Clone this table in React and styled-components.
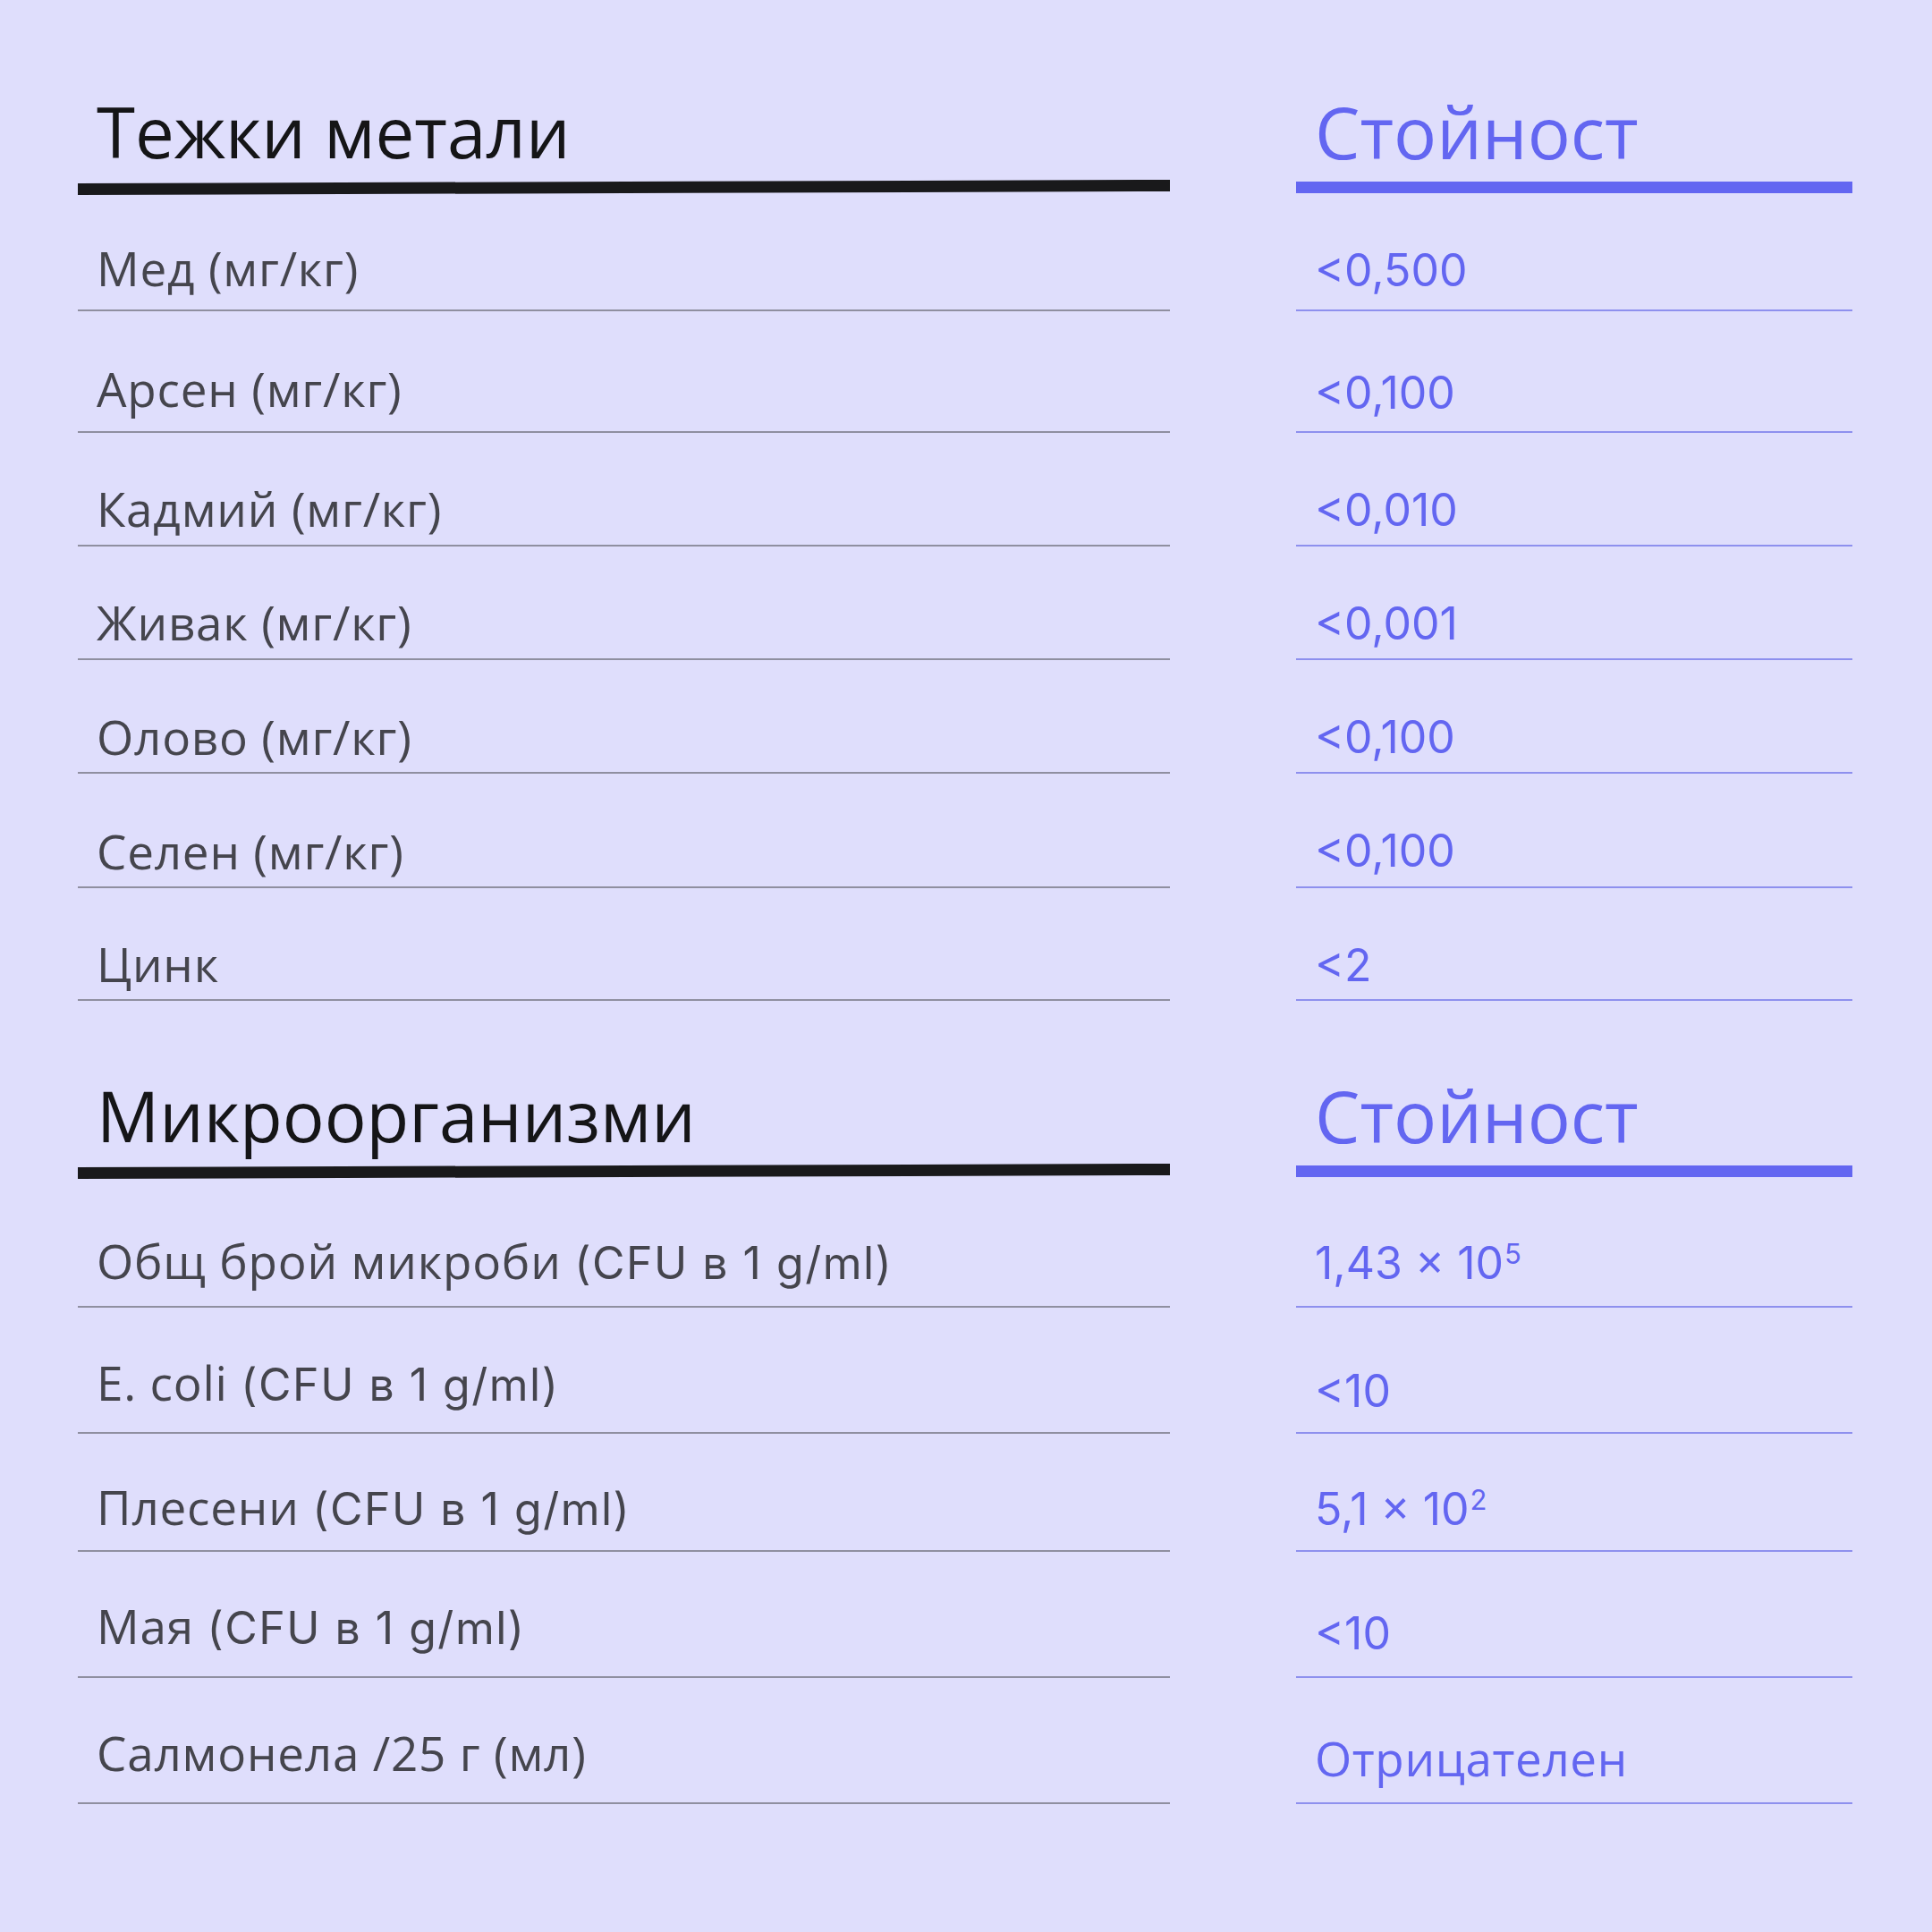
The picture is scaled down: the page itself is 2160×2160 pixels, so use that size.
import styled, { createGlobalStyle } from "styled-components";

const metals = [
  { label: "Мед", unit: "(мг/кг)", value: "<0,500", h: 132, pb: 20, vpb: 17 },
  { label: "Арсен", unit: "(мг/кг)", value: "<0,100", h: 136, pb: 21, vpb: 16 },
  { label: "Кадмий", unit: "(мг/кг)", value: "<0,010", h: 127, pb: 14, vpb: 12 },
  { label: "Живак", unit: "(мг/кг)", value: "<0,001", h: 127, pb: 14, vpb: 12 },
  { label: "Олово", unit: "(мг/кг)", value: "<0,100", h: 127, pb: 13, vpb: 12 },
  { label: "Селен", unit: "(мг/кг)", value: "<0,100", h: 128, pb: 13, vpb: 13 },
  { label: "Цинк", value: "<2", h: 126, pb: 13, vpb: 11 },
];

const microbes = [
  { label: "Общ брой микроби", unit: "(CFU в 1 g/ml)", latin: true, value: "1,43 × 10", exp: "5", h: 146, pb: 21, vpb: 21 },
  { label: "E. coli", unit: "(CFU в 1 g/ml)", latin: true, value: "<10", h: 141, pb: 26, vpb: 19 },
  { label: "Плесени", unit: "(CFU в 1 g/ml)", latin: true, value: "5,1 × 10", exp: "2", h: 132, pb: 19, vpb: 19 },
  { label: "Мая", unit: "(CFU в 1 g/ml)", latin: true, value: "<10", h: 141, pb: 27, vpb: 21 },
  { label: "Салмонела /25 г (мл)", value: "Отрицателен", cyr: true, h: 141, pb: 29, vpb: 23 },
];

const GlobalStyle = createGlobalStyle`
  html, body {
    margin: 0;
    padding: 0;
    background: #dfdefc;
  }
  body {
    font-family: "Open Sans", "Noto Sans", sans-serif;
  }
`;

const Page = styled.main`
  width: 2160px;
  height: 2160px;
  box-sizing: border-box;
  padding: 107px 89px 0 87px;
  background: #dfdefc;
`;

const Section = styled.section`
  display: grid;
  grid-template-columns: 1221px 622px;
  column-gap: 141px;
  margin-top: ${(p) => p.$top || 0}px;
`;

const HeadCell = styled.div`
  display: flex;
  flex-direction: column;
`;

const Title = styled.h2`
  margin: 0;
  padding-left: 21px;
  font-size: ${(p) => (p.$accent ? 80 : 78)}px;
  line-height: 80px;
  font-weight: 400;
  white-space: nowrap;
  color: ${(p) => (p.$accent ? "#6366f1" : "#151517")};
`;

const Bar = styled.div`
  height: 13px;
  margin-top: 16px;
  background: ${(p) => (p.$accent ? "#6366f1" : "#19191b")};
  transform: ${(p) => (p.$accent ? "none" : "rotate(-0.19deg)")};
`;

const Row = styled.div`
  height: ${(p) => p.$h}px;
  box-sizing: border-box;
  display: flex;
  align-items: flex-end;
  padding: 0 0 ${(p) => p.$pb}px 21px;
  border-bottom: 2px solid ${(p) => (p.$accent ? "#8e90ee" : "#8f8fa0")};
`;

const Label = styled.span`
  font-size: 53px;
  line-height: 53px;
  letter-spacing: 0.8px;
  color: #45454d;
  white-space: nowrap;
`;

const Unit = styled.span`
  font-family: ${(p) => (p.$latin ? 'Inter, "Open Sans", sans-serif' : "inherit")};
  font-size: ${(p) => (p.$latin ? 50 : 53)}px;
  letter-spacing: ${(p) => (p.$latin ? 1.5 : 0.8)}px;
`;

const Value = styled.span`
  font-family: ${(p) => (p.$cyr ? '"Open Sans", sans-serif' : 'Inter, "Open Sans", sans-serif')};
  font-size: ${(p) => (p.$cyr ? 53 : 50)}px;
  letter-spacing: ${(p) => (p.$cyr ? 0.6 : 0)}px;
  line-height: 53px;
  color: #6366f1;
  white-space: nowrap;
`;

const Sup = styled.span`
  font-size: 31px;
  line-height: 0;
  vertical-align: 17px;
  margin-left: 1px;
`;

const Table = ({ title, rows, top }) => (
  <Section $top={top}>
    <HeadCell>
      <Title>{title}</Title>
      <Bar />
    </HeadCell>
    <HeadCell>
      <Title $accent>Стойност</Title>
      <Bar $accent />
    </HeadCell>
    {rows.map((r, i) => [
      <Row key={"l" + i} $h={r.h} $pb={r.pb}>
        <Label>
          {r.label}
          {r.unit && " "}
          {r.unit && <Unit $latin={r.latin}>{r.unit}</Unit>}
        </Label>
      </Row>,
      <Row key={"r" + i} $h={r.h} $pb={r.vpb} $accent>
        <Value $cyr={r.cyr}>
          {r.value}
          {r.exp && <Sup>{r.exp}</Sup>}
        </Value>
      </Row>,
    ])}
  </Section>
);

export default function App() {
  return (
    <>
      <GlobalStyle />
      <Page>
        <Table title="Тежки метали" rows={metals} />
        <Table title="Микроорганизми" rows={microbes} top={88} />
      </Page>
    </>
  );
}
